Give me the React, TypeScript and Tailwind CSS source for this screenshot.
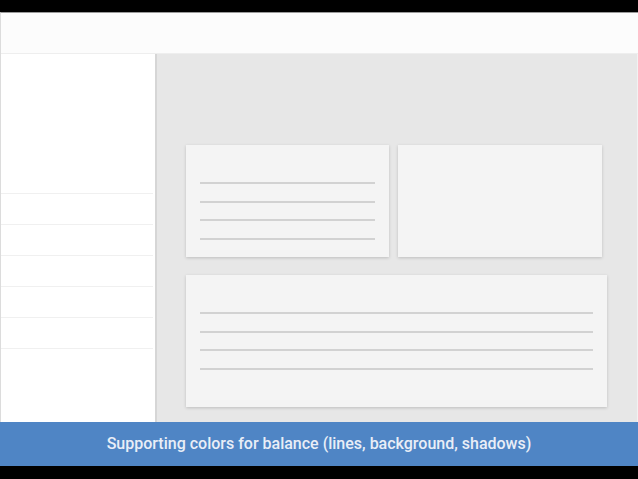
import React from "react";

const Lines = ({ count }: { count: number }) => (
  <div className="flex flex-col gap-[16.5px]">
    {Array.from({ length: count }).map((_, i) => (
      <div key={i} className="h-[2px] bg-[#d2d2d2]" />
    ))}
  </div>
);

export default function App() {
  return (
    <div className="w-[638px] h-[479px] bg-black flex flex-col overflow-hidden" style={{ fontFamily: "Roboto, 'Liberation Sans', sans-serif" }}>
      <div className="h-[12px] shrink-0" />
      <div className="flex-1 flex flex-col bg-[#e7e7e7] border-l border-[#dcdcdc] border-t border-t-[#9a9a9a]">
        {/* header */}
        <div className="h-[41px] shrink-0 bg-[#fcfcfc] border-b border-[#eeeeee]" />
        <div className="flex-1 flex">
          {/* sidebar */}
          <div className="w-[156px] shrink-0 bg-white border-r-2 border-[#d6d6d6] pt-[139px] pr-[2px]">
            {Array.from({ length: 6 }).map((_, i) => (
              <div key={i} className="h-[31px] border-t border-[#f0f0f0]" />
            ))}
          </div>
          {/* main */}
          <div className="flex-1 pl-[29px] pt-[91px] border-r border-[#f2f2f2]">
            <div className="flex gap-[9px]">
              <div className="w-[203px] h-[112px] bg-[#f4f4f4] shadow-[0_1px_3px_rgba(0,0,0,0.18)] px-[14px] pt-[37px]">
                <Lines count={4} />
              </div>
              <div className="w-[204px] h-[112px] bg-[#f4f4f4] shadow-[0_1px_3px_rgba(0,0,0,0.18)]" />
            </div>
            <div className="mt-[18px] w-[421px] h-[132px] bg-[#f4f4f4] shadow-[0_1px_3px_rgba(0,0,0,0.18)] px-[14px] pt-[37px]">
              <Lines count={4} />
            </div>
          </div>
        </div>
      </div>
      {/* caption */}
      <div className="h-[44px] shrink-0 bg-[#4f85c5] flex items-center justify-center text-[16px] font-medium text-[#e9eef7]">
        Supporting colors for balance (lines, background, shadows)
      </div>
      <div className="h-[13px] shrink-0" />
    </div>
  );
}
